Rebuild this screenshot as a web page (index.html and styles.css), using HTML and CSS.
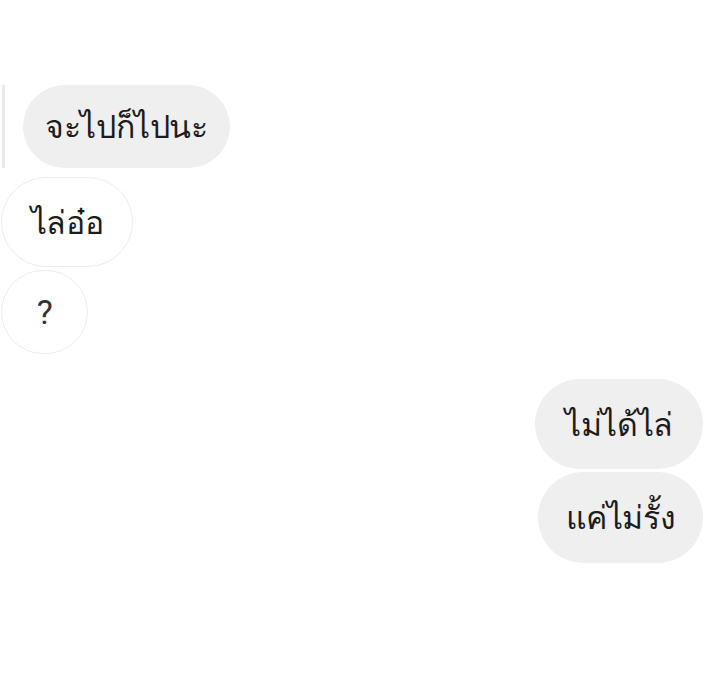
FILE: index.html
```html
<!DOCTYPE html>
<html lang="th">
<head>
  <meta charset="UTF-8">
  <title>Chat</title>
  <link rel="stylesheet" href="styles.css">
</head>
<body>

  <div class="thread">
    <div class="row in reply">
      <div class="quote-bar"></div>
      <div class="bubble filled b1">จะไปก็ไปนะ</div>
    </div>

    <div class="row in gap-s">
      <div class="bubble outline b2">ไล่อ๋อ</div>
    </div>

    <div class="row in gap-xs">
      <div class="bubble outline b3">?</div>
    </div>

    <div class="row out gap-l">
      <div class="bubble filled b4">ไม่ได้ไล่</div>
    </div>

    <div class="row out gap-xs">
      <div class="bubble filled b5">แค่ไม่รั้ง</div>
    </div>
  </div>

</body>
</html>
```

FILE: styles.css
```css
body {
  margin: 0;
  background: #fff;
  font-family: "Noto Sans", Roboto, sans-serif;
  color: #1c1c1c;
}
.thread {
  display: flex;
  flex-direction: column;
  padding-top: 85px;
}
.row {
  display: flex;
  align-items: stretch;
}
.row.in { padding-left: 1px; }
.row.out {
  justify-content: flex-end;
  padding-right: 17px;
}
.row.reply { padding-left: 2px; }
.gap-xs { margin-top: 3px; }
.gap-s { margin-top: 9px; }
.gap-l { margin-top: 25px; }

.quote-bar {
  width: 3px;
  background: #e9e9e9;
  margin-right: 18px;
}

.bubble {
  display: flex;
  align-items: center;
  justify-content: center;
  box-sizing: border-box;
  padding: 0 20px;
  font-size: 32px;
  letter-spacing: -0.4px;
  border-radius: 46px;
  white-space: nowrap;
}
.bubble.filled { background: #efefef; }
.bubble.outline {
  background: #fff;
  border: 1px solid #ececec;
}
.b1 { height: 83px; width: 207px; }
.b2 { height: 90px; width: 132px; }
.b3 { height: 84px; width: 87px; font-family: Roboto, sans-serif; font-size: 34px; color: #333; }
.b4 { height: 90px; width: 168px; }
.b5 { height: 91px; width: 165px; }
```
